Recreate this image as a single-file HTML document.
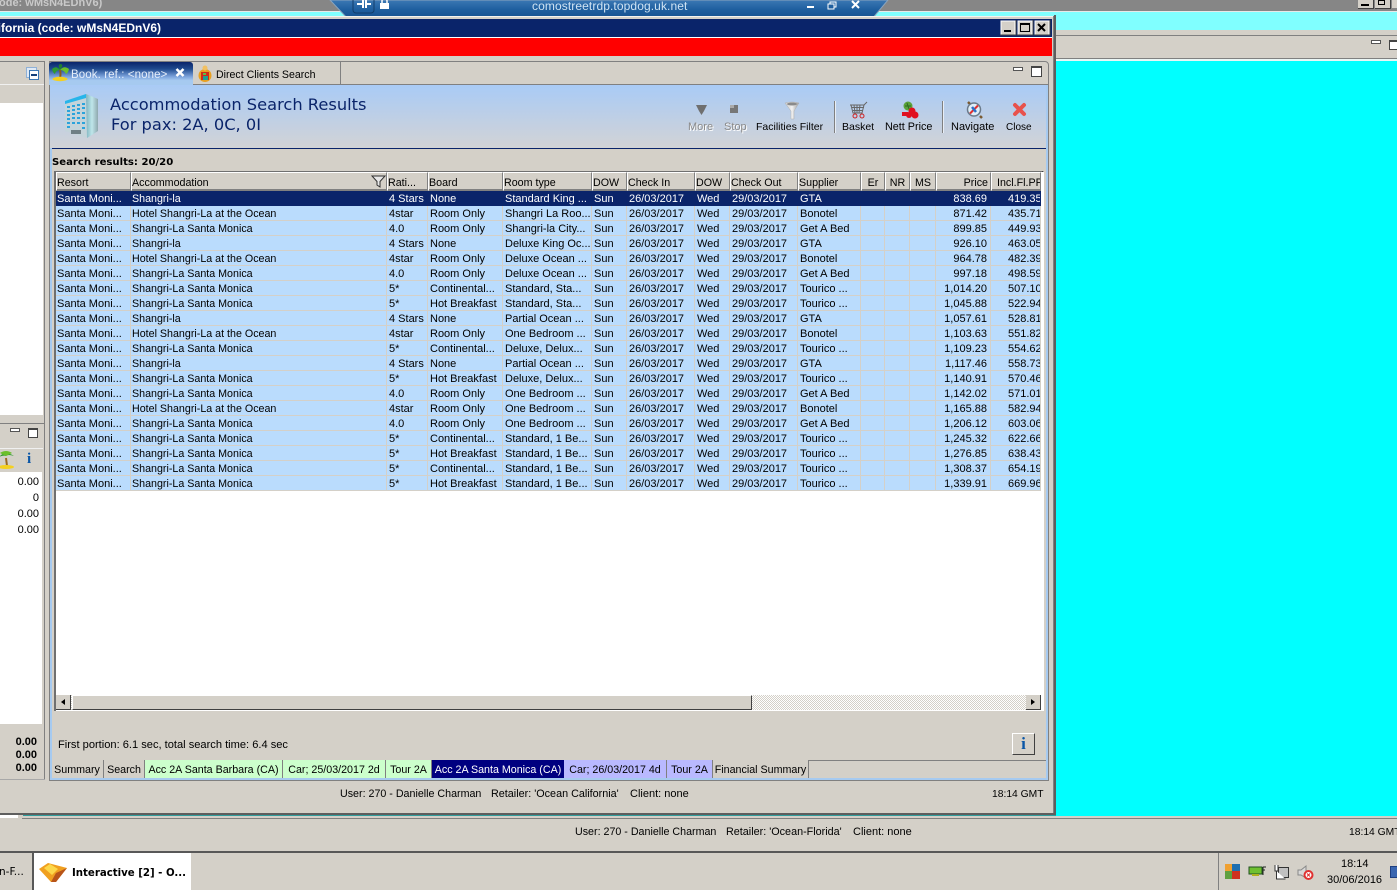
<!DOCTYPE html>
<html><head><meta charset="utf-8"><title>Accommodation Search Results</title>
<style>
html,body{margin:0;padding:0;width:1397px;height:890px;overflow:hidden;background:#d4d0c8}
body{position:relative;font:11px/13px "Liberation Sans",sans-serif;color:#000}
.a{position:absolute}
.t{position:absolute;white-space:nowrap;font:11px/17px "Liberation Sans",sans-serif;color:#000}
table{position:absolute;border-collapse:separate;border-spacing:0;table-layout:fixed;font:11px/13px "Liberation Sans",sans-serif}
#rows{left:56px;top:191px;width:985px}
#rows td{height:14px;padding:0 0 0 2px;border-right:1px solid #d4d0c8;border-bottom:1px solid #d4d0c8;background:#badcfd;white-space:nowrap;overflow:hidden;line-height:12px;vertical-align:bottom;box-sizing:content-box}
#rows td:nth-child(-n+2){padding-left:1px}
#rows td:nth-child(2){font-size:10.7px}
#rows tr.s td{background:#0a246a;color:#fff;border-color:#0a246a}
#rows td.r{text-align:right;padding:0 3px 0 0}
#rows td.q{padding-left:17px}
#hd{left:56px;top:172px;width:985px}
#hd th{padding:4px 0 0 0;font-weight:400;font-size:10.7px;line-height:13px;text-align:left;background:#d4d0c8;border-top:1px solid #fff;border-left:1px solid #fff;border-right:1px solid #808080;border-bottom:1px solid #808080;box-shadow:inset 0 -1px #808080;white-space:nowrap;overflow:hidden;box-sizing:content-box}
#hd th.r{text-align:right;padding:4px 2px 0 0}
#hd th.m{text-align:center;padding:4px 0 0 0}
.tab{position:absolute;top:760px;height:18px;line-height:20px;font-size:10.7px;text-align:center;white-space:nowrap;border-right:1px solid #808080;box-sizing:border-box}
</style></head><body>

<!-- top grey band + background -->
<div class="a" style="left:0;top:0;width:1397px;height:11px;background:#868686"></div>
<div class="a" style="left:0;top:11px;width:1397px;height:1px;background:#e8e8e8"></div>
<div class="a" style="left:1056px;top:12px;width:341px;height:18px;background:#80ffff"></div>
<div class="a" style="left:0;top:12px;width:1056px;height:4px;background:#80ffff"></div>
<div class="t" style="left:-1px;top:-4px;font-weight:700;color:#c9c9c9;font-size:11px;line-height:14px">ode: wMsN4EDnV6)</div>
<div class="a" style="left:1358px;top:0;width:15px;height:8px;background:#d4d0c8;border-right:1px solid #404040;border-bottom:1px solid #404040"><div class="a" style="left:3px;top:4px;width:8px;height:2px;background:#000"></div></div>
<div class="a" style="left:1375px;top:0;width:15px;height:8px;background:#d4d0c8;border-right:1px solid #404040;border-bottom:1px solid #404040"><div class="a" style="left:3px;top:0;width:7px;height:5px;border:1px solid #000;box-sizing:border-box"></div></div>
<div class="a" style="left:1392px;top:0;width:5px;height:8px;background:#d4d0c8"></div>

<!-- right background pane -->
<div class="a" style="left:1056px;top:30px;width:341px;height:5px;background:#d4d0c8"></div>
<div class="a" style="left:1056px;top:35px;width:341px;height:1px;background:#808080"></div>
<div class="a" style="left:1056px;top:36px;width:341px;height:22px;background:#d4d0c8"></div>
<div class="a" style="left:1056px;top:58px;width:341px;height:1px;background:#808080"></div>
<div class="a" style="left:1056px;top:59px;width:341px;height:2px;background:#e9f6f5"></div>
<div class="a" style="left:1056px;top:61px;width:341px;height:755px;background:#0ff"></div>
<div class="a" style="left:1371px;top:40px;width:10px;height:4px;background:#fff;border:1px solid #555;box-sizing:border-box"></div>
<div class="a" style="left:1389px;top:40px;width:8px;height:10px;background:#fff;border:1px solid #444;border-right:0;border-top-width:2px;box-sizing:border-box"></div>

<!-- RDP connection bar -->
<svg class="a" style="left:325px;top:0" width="570" height="21">
<defs><linearGradient id="cb" x1="0" y1="0" x2="0" y2="1"><stop offset="0" stop-color="#3b78b4"/><stop offset=".5" stop-color="#1f5f9f"/><stop offset="1" stop-color="#15508f"/></linearGradient></defs>
<polygon points="5,0 563,0 547,19 23,19" fill="url(#cb)" stroke="#8aa4bd" stroke-width="1"/>
<rect x="28" y="-4" width="21" height="17" rx="3" fill="none" stroke="#123d6b"/>
<path d="M32 4h6M38 0v8M41 0v8M41 4h5" stroke="#fff" stroke-width="2" fill="none"/>
<rect x="55" y="3" width="9" height="6" fill="#fff"/><path d="M57 3V1a2.500 2.500 0 015 0v2" stroke="#fff" stroke-width="1.500" fill="none"/>
<rect x="482" y="6" width="7" height="2" fill="#fff"/>
<rect x="505" y="2" width="6" height="5" fill="none" stroke="#fff"/><rect x="503" y="4" width="6" height="5" fill="#1f5f9f" stroke="#fff"/>
<path d="M527 1l7 7M534 1l-7 7" stroke="#fff" stroke-width="2"/>
</svg>
<div class="t" style="left:532px;top:-1px;color:#cfe3f3;font-size:12px;line-height:14px;letter-spacing:.1px">comostreetrdp.topdog.uk.net</div>

<!-- main window frame -->
<div class="a" style="left:0;top:16px;width:1056px;height:800px;background:#d4d0c8"></div>
<div class="a" style="left:0;top:16px;width:1054px;height:1px;background:#f4f2ee"></div>
<div class="a" style="left:1053px;top:16px;width:1px;height:798px;background:#808080"></div>
<div class="a" style="left:1054px;top:15px;width:2px;height:800px;background:#5e5e5e"></div>
<div class="a" style="left:0;top:813px;width:1056px;height:2px;background:#5e5e5e"></div>
<div class="a" style="left:0;top:19px;width:1052px;height:18px;background:#0a246a"></div>
<div class="t" style="left:-21px;top:21px;color:#fff;font-weight:700;font-size:12px;line-height:15px">California (code: wMsN4EDnV6)</div>
<div class="a" style="left:0;top:37px;width:1052px;height:1px;background:#fff"></div>
<div class="a" style="left:0;top:38px;width:1052px;height:18px;background:#f00"></div>

<!-- window buttons -->
<svg class="a" style="left:1000px;top:20px" width="52" height="16">
<g><rect x="1" y="1" width="14" height="14" fill="#d4d0c8" stroke="#fff"/><path d="M16 0v15H0" fill="none" stroke="#404040"/><rect x="4" y="10" width="7" height="2" fill="#000"/></g>
<g transform="translate(17 0)"><rect x="1" y="1" width="14" height="14" fill="#d4d0c8" stroke="#fff"/><path d="M16 0v15H0" fill="none" stroke="#404040"/><rect x="3.500" y="3.500" width="9" height="8" fill="none" stroke="#000"/><rect x="3" y="3" width="10" height="2" fill="#000"/></g>
<g transform="translate(34 0)"><rect x="1" y="1" width="14" height="14" fill="#d4d0c8" stroke="#fff"/><path d="M16 0v15H0" fill="none" stroke="#404040"/><path d="M4 4l7 7M11 4l-7 7" stroke="#000" stroke-width="2"/></g>
</svg>

<!-- left upper pane -->
<div class="a" style="left:0;top:61px;width:45px;height:1px;background:#808080"></div>
<div class="a" style="left:44px;top:61px;width:1px;height:719px;background:#808080"></div>
<div class="a" style="left:0;top:84px;width:44px;height:1px;background:#f0f0f0"></div>
<div class="a" style="left:0;top:85px;width:44px;height:18px;background:#d4d0c8"></div>
<div class="a" style="left:0;top:103px;width:43px;height:312px;background:#fff"></div>
<svg class="a" style="left:26px;top:67px" width="14" height="14"><rect x=".5" y=".5" width="10" height="10" fill="#dfe9f5" stroke="#8fb0d6"/><rect x="3.500" y="3.500" width="9" height="9" fill="#fff" stroke="#3d78b4"/><rect x="5" y="7" width="6" height="2" fill="#16407a"/></svg>

<!-- left lower pane -->
<div class="a" style="left:0;top:423px;width:44px;height:1px;background:#808080"></div>
<div class="a" style="left:10px;top:428px;width:10px;height:4px;background:#fff;border:1px solid #555;box-sizing:border-box"></div>
<div class="a" style="left:28px;top:428px;width:10px;height:10px;background:#fff;border:1px solid #444;border-top-width:2px;box-sizing:border-box"></div>
<div class="a" style="left:0;top:448px;width:43px;height:1px;background:#f0f0f0"></div>
<svg class="a" style="left:0;top:449px" width="16" height="20"><path d="M6 9l1 8" stroke="#9a6a1f" stroke-width="2"/><ellipse cx="6" cy="18" rx="8" ry="2" fill="#f4d020"/><path d="M-1 8Q5 1 14 7Q8 5 6 7Q3 6-1 8z" fill="#2f9a2f"/><path d="M0 4Q6 0 12 4L6 7z" fill="#6cbf2a"/></svg>
<div class="t" style="left:27px;top:451px;color:#0a56a6;font:700 15px/16px 'Liberation Serif',serif">i</div>
<div class="a" style="left:0;top:472px;width:42px;height:252px;background:#fff"></div>
<div class="t" style="right:1358px;top:474px">0.00</div>
<div class="t" style="right:1358px;top:490px">0</div>
<div class="t" style="right:1358px;top:506px">0.00</div>
<div class="t" style="right:1358px;top:522px">0.00</div>
<div class="t" style="right:1360px;top:734px;font-weight:700">0.00</div>
<div class="t" style="right:1360px;top:747px;font-weight:700">0.00</div>
<div class="t" style="right:1360px;top:760px;font-weight:700">0.00</div>
<div class="a" style="left:0;top:779px;width:45px;height:1px;background:#a8a8a8"></div>

<!-- main pane -->
<div class="a" style="left:49px;top:61px;width:1000px;height:720px;background:#d4d0c8;border:1px solid #808080;border-radius:0 4px 0 0;box-sizing:border-box"></div>
<div class="a" style="left:50px;top:85px;width:2px;height:695px;background:#a6caf0"></div>
<div class="a" style="left:1046px;top:85px;width:2px;height:695px;background:#a6caf0"></div>
<div class="a" style="left:50px;top:778px;width:998px;height:2px;background:#a6caf0"></div>
<div class="a" style="left:50px;top:84px;width:998px;height:1px;background:#808080"></div>
<div class="a" style="left:50px;top:85px;width:996px;height:63px;background:linear-gradient(#a9cbf6,#d2d3d6)"></div>
<div class="a" style="left:52px;top:148px;width:994px;height:1px;background:#0a246a"></div>

<!-- pane tabs -->
<div class="a" style="left:49px;top:62px;width:144px;height:23px;background:linear-gradient(#0a246a,#1f4a8e 30%,#7fa6de 65%,#a6caf0 80%);border-radius:3px 3px 0 0"></div>
<div class="a" style="left:193px;top:62px;width:148px;height:22px;border-right:1px solid #808080;box-sizing:border-box"></div>
<svg class="a" style="left:52px;top:64px" width="18" height="18">
<path d="M8 6q1 4 0 8" stroke="#8a5a1a" stroke-width="2" fill="none"/>
<ellipse cx="8" cy="15" rx="7.500" ry="2.200" fill="#f4d020"/>
<path d="M8 6Q4 1 0 5Q1 9 3 10Q4 6 8 6z" fill="#2f9a2f"/>
<path d="M8 6Q12 1 17 5Q16 9 14 10Q12 6 8 6z" fill="#6cbf2a"/>
<path d="M8 6Q5 0 9 0Q12 1 8 6z" fill="#1f7f2f"/>
</svg>
<div class="t" style="left:71px;top:67px;color:#e6eefa;font-size:11.500px;letter-spacing:.1px">Book. ref.: &lt;none&gt;</div>
<svg class="a" style="left:175px;top:68px" width="11" height="10"><path d="M1.500 1l7 7M8.500 1l-7 7" stroke="#fff" stroke-width="2.500"/></svg>
<svg class="a" style="left:197px;top:65px" width="17" height="17"><circle cx="8" cy="10.500" r="6.500" fill="#e8a020"/><rect x="4" y="7" width="8" height="8" fill="#d02a1a"/><circle cx="8" cy="3" r="2.500" fill="#f2c060"/><rect x="6" y="11" width="5" height="4" fill="#1fa090"/><rect x="6" y="8" width="3" height="2" fill="#5fc040"/></svg>
<div class="t" style="left:216px;top:67px;font-size:10.600px">Direct Clients Search</div>
<div class="a" style="left:1013px;top:67px;width:10px;height:4px;background:#fff;border:1px solid #555;box-sizing:border-box"></div>
<div class="a" style="left:1031px;top:66px;width:11px;height:11px;background:#fff;border:1px solid #444;border-top-width:2px;box-sizing:border-box"></div>

<!-- header content -->
<svg class="a" style="left:64px;top:92px" width="36" height="48">
<defs><linearGradient id="bd" x1="0" y1="0" x2="1" y2="0"><stop offset="0" stop-color="#7fb4bf"/><stop offset=".5" stop-color="#bfe6ea"/><stop offset="1" stop-color="#8fa8ae"/></linearGradient></defs>
<polygon points="1,9 22,3 23,46 1,39" fill="#c4d4da"/>
<polygon points="22,2 34,7 34,39 23,46" fill="url(#bd)"/>
<polygon points="1,9 22,2 22,6 1,12" fill="#27b5ea"/>
<g fill="#2aa3dc"><rect x="3" y="14" width="3" height="2"/><rect x="8" y="13" width="3" height="2"/><rect x="13" y="12" width="3" height="2"/><rect x="18" y="11" width="3" height="2"/>
<rect x="3" y="18" width="3" height="2"/><rect x="8" y="17" width="3" height="2"/><rect x="13" y="16" width="3" height="2"/><rect x="18" y="15" width="3" height="2"/>
<rect x="3" y="22" width="3" height="2"/><rect x="8" y="21" width="3" height="2"/><rect x="13" y="20" width="3" height="2"/><rect x="18" y="20" width="3" height="2"/>
<rect x="3" y="26" width="3" height="2"/><rect x="8" y="25" width="3" height="2"/><rect x="13" y="25" width="3" height="2"/><rect x="18" y="25" width="3" height="2"/>
<rect x="3" y="30" width="3" height="2"/><rect x="8" y="30" width="3" height="2"/><rect x="13" y="30" width="3" height="2"/><rect x="18" y="30" width="3" height="2"/>
<rect x="3" y="34" width="3" height="2"/><rect x="18" y="35" width="3" height="2"/></g>
<rect x="7" y="38" width="10" height="4" fill="#6f7f85"/>
</svg>
<div class="t" style="left:110px;top:95px;color:#0a246a;font:16.250px/20px 'DejaVu Sans',sans-serif">Accommodation Search Results</div>
<div class="t" style="left:111px;top:115px;color:#0a246a;font:16.250px/20px 'DejaVu Sans',sans-serif">For pax: 2A, 0C, 0I</div>

<!-- toolbar -->
<svg class="a" style="left:695px;top:103px" width="13" height="13"><path d="M1 2h11l-3 6-2.500 4L4 8z" fill="#6f6f6f"/></svg>
<svg class="a" style="left:729px;top:104px" width="10" height="10"><rect x="1" y="1" width="8" height="8" fill="#777"/><rect x="1" y="1" width="4" height="3" fill="#aaa"/></svg>
<svg class="a" style="left:784px;top:101px" width="16" height="19">
<defs><linearGradient id="fn" x1="0" y1="0" x2="1" y2="0"><stop offset="0" stop-color="#c8c8c8"/><stop offset=".5" stop-color="#f2f2f2"/><stop offset="1" stop-color="#9a9a9a"/></linearGradient></defs>
<path d="M1 2Q8 0 15 2L10 10V18H7V10z" fill="url(#fn)" stroke="#b0b0b0" stroke-width=".5"/><ellipse cx="8" cy="3" rx="5" ry="1.500" fill="#8a8a8a"/></svg>
<div class="t" style="left:688px;top:119px;color:#8a8a8a;text-shadow:1px 1px 0 #fff">More</div>
<div class="t" style="left:724px;top:119px;color:#8a8a8a;text-shadow:1px 1px 0 #fff">Stop</div>
<div class="t" style="left:756px;top:119px;font-size:10.500px">Facilities Filter</div>
<div class="a" style="left:834px;top:101px;width:1px;height:32px;background:#808080;border-right:1px solid #e8eef6"></div>
<svg class="a" style="left:850px;top:101px" width="18" height="18"><path d="M0 4h14l3-3M1 4l2 8h9l2-8M4 4l1 8M7 4v8M10 4l-1 8M2 6.500h12M3 9.500h10" stroke="#666" stroke-width="1" fill="none"/><circle cx="5" cy="15" r="2" fill="none" stroke="#d02020"/><circle cx="12" cy="15" r="2" fill="none" stroke="#d02020"/></svg>
<div class="t" style="left:842px;top:119px;font-size:10.500px">Basket</div>
<svg class="a" style="left:901px;top:101px" width="18" height="18"><circle cx="7" cy="5" r="4.500" fill="#5aa23a"/><path d="M4 5h6M6 2l2 6" stroke="#2f6a20"/><rect x="1" y="11" width="6" height="4" fill="#e01020"/><circle cx="11" cy="10" r="3.500" fill="#e01020"/><circle cx="14" cy="14" r="3.500" fill="#e01020"/><circle cx="8" cy="14" r="3" fill="#e01020"/></svg>
<div class="t" style="left:885px;top:119px;font-size:10.800px">Nett Price</div>
<div class="a" style="left:942px;top:101px;width:1px;height:32px;background:#808080;border-right:1px solid #e8eef6"></div>
<svg class="a" style="left:965px;top:100px" width="18" height="19"><path d="M3 2l3 3M15 16l2 2" stroke="#7a5a30" stroke-width="2.500"/><circle cx="9" cy="9.500" r="6.500" fill="#dfeef8" stroke="#6a7a8a" stroke-width="1.500"/><path d="M5 13.500l8-8" stroke="#e03030" stroke-width="2"/><path d="M7 7l4 5" stroke="#2a70c8" stroke-width="2.500"/></svg>
<div class="t" style="left:951px;top:119px">Navigate</div>
<svg class="a" style="left:1012px;top:102px" width="15" height="15"><path d="M3 3l9 9M12 3l-9 9" stroke="#e8524c" stroke-width="4" stroke-linecap="round"/></svg>
<div class="t" style="left:1006px;top:119px;font-size:10px">Close</div>

<div class="t" style="left:52px;top:154px;font-weight:700;font-family:'DejaVu Sans',sans-serif;font-size:10.100px">Search results: 20/20</div>

<!-- grid frame -->
<div class="a" style="left:54px;top:171px;width:990px;height:540px;background:#fff;border-top:1px solid #404040;border-left:1px solid #404040;border-right:1px solid #fff;border-bottom:1px solid #fff;box-sizing:border-box"></div>
<div class="a" style="left:54px;top:171px;width:2px;height:540px;background:#707070"></div>
<div class="a" style="left:54px;top:171px;width:988px;height:1px;background:#707070"></div>

<table id="hd"><colgroup><col style="width:75px"><col style="width:256px"><col style="width:41px"><col style="width:75px"><col style="width:89px"><col style="width:35px"><col style="width:68px"><col style="width:35px"><col style="width:68px"><col style="width:63px"><col style="width:24px"><col style="width:25px"><col style="width:26px"><col style="width:55px"><col style="width:50px"></colgroup>
<tr><th>Resort</th><th>Accommodation</th><th>Rati...</th><th>Board</th><th>Room type</th><th>DOW</th><th>Check In</th><th>DOW</th><th>Check Out</th><th>Supplier</th><th class="m">Er</th><th class="m">NR</th><th class="m">MS</th><th class="r">Price</th><th style="padding-left:5px">Incl.Fl.PP</th></tr></table>
<svg class="a" style="left:371px;top:175px" width="15" height="13"><path d="M1 1h13L9 6.500V12L6 10V6.500z" fill="#e8e8e8" stroke="#303030"/></svg>

<table id="rows"><colgroup><col style="width:75px"><col style="width:256px"><col style="width:41px"><col style="width:75px"><col style="width:89px"><col style="width:35px"><col style="width:68px"><col style="width:35px"><col style="width:68px"><col style="width:63px"><col style="width:24px"><col style="width:25px"><col style="width:26px"><col style="width:55px"><col style="width:50px"></colgroup>
<tr class="s"><td>Santa Moni...</td><td>Shangri-la</td><td>4 Stars</td><td>None</td><td>Standard King ...</td><td>Sun</td><td>26/03/2017</td><td>Wed</td><td>29/03/2017</td><td>GTA</td><td></td><td></td><td></td><td class="r">838.69</td><td class="q">419.35</td></tr>
<tr><td>Santa Moni...</td><td>Hotel Shangri-La at the Ocean</td><td>4star</td><td>Room Only</td><td>Shangri La Roo...</td><td>Sun</td><td>26/03/2017</td><td>Wed</td><td>29/03/2017</td><td>Bonotel</td><td></td><td></td><td></td><td class="r">871.42</td><td class="q">435.71</td></tr>
<tr><td>Santa Moni...</td><td>Shangri-La Santa Monica</td><td>4.0</td><td>Room Only</td><td>Shangri-la City...</td><td>Sun</td><td>26/03/2017</td><td>Wed</td><td>29/03/2017</td><td>Get A Bed</td><td></td><td></td><td></td><td class="r">899.85</td><td class="q">449.93</td></tr>
<tr><td>Santa Moni...</td><td>Shangri-la</td><td>4 Stars</td><td>None</td><td>Deluxe King Oc...</td><td>Sun</td><td>26/03/2017</td><td>Wed</td><td>29/03/2017</td><td>GTA</td><td></td><td></td><td></td><td class="r">926.10</td><td class="q">463.05</td></tr>
<tr><td>Santa Moni...</td><td>Hotel Shangri-La at the Ocean</td><td>4star</td><td>Room Only</td><td>Deluxe Ocean ...</td><td>Sun</td><td>26/03/2017</td><td>Wed</td><td>29/03/2017</td><td>Bonotel</td><td></td><td></td><td></td><td class="r">964.78</td><td class="q">482.39</td></tr>
<tr><td>Santa Moni...</td><td>Shangri-La Santa Monica</td><td>4.0</td><td>Room Only</td><td>Deluxe Ocean ...</td><td>Sun</td><td>26/03/2017</td><td>Wed</td><td>29/03/2017</td><td>Get A Bed</td><td></td><td></td><td></td><td class="r">997.18</td><td class="q">498.59</td></tr>
<tr><td>Santa Moni...</td><td>Shangri-La Santa Monica</td><td>5*</td><td>Continental...</td><td>Standard, Sta...</td><td>Sun</td><td>26/03/2017</td><td>Wed</td><td>29/03/2017</td><td>Tourico ...</td><td></td><td></td><td></td><td class="r">1,014.20</td><td class="q">507.10</td></tr>
<tr><td>Santa Moni...</td><td>Shangri-La Santa Monica</td><td>5*</td><td>Hot Breakfast</td><td>Standard, Sta...</td><td>Sun</td><td>26/03/2017</td><td>Wed</td><td>29/03/2017</td><td>Tourico ...</td><td></td><td></td><td></td><td class="r">1,045.88</td><td class="q">522.94</td></tr>
<tr><td>Santa Moni...</td><td>Shangri-la</td><td>4 Stars</td><td>None</td><td>Partial Ocean ...</td><td>Sun</td><td>26/03/2017</td><td>Wed</td><td>29/03/2017</td><td>GTA</td><td></td><td></td><td></td><td class="r">1,057.61</td><td class="q">528.81</td></tr>
<tr><td>Santa Moni...</td><td>Hotel Shangri-La at the Ocean</td><td>4star</td><td>Room Only</td><td>One Bedroom ...</td><td>Sun</td><td>26/03/2017</td><td>Wed</td><td>29/03/2017</td><td>Bonotel</td><td></td><td></td><td></td><td class="r">1,103.63</td><td class="q">551.82</td></tr>
<tr><td>Santa Moni...</td><td>Shangri-La Santa Monica</td><td>5*</td><td>Continental...</td><td>Deluxe, Delux...</td><td>Sun</td><td>26/03/2017</td><td>Wed</td><td>29/03/2017</td><td>Tourico ...</td><td></td><td></td><td></td><td class="r">1,109.23</td><td class="q">554.62</td></tr>
<tr><td>Santa Moni...</td><td>Shangri-la</td><td>4 Stars</td><td>None</td><td>Partial Ocean ...</td><td>Sun</td><td>26/03/2017</td><td>Wed</td><td>29/03/2017</td><td>GTA</td><td></td><td></td><td></td><td class="r">1,117.46</td><td class="q">558.73</td></tr>
<tr><td>Santa Moni...</td><td>Shangri-La Santa Monica</td><td>5*</td><td>Hot Breakfast</td><td>Deluxe, Delux...</td><td>Sun</td><td>26/03/2017</td><td>Wed</td><td>29/03/2017</td><td>Tourico ...</td><td></td><td></td><td></td><td class="r">1,140.91</td><td class="q">570.46</td></tr>
<tr><td>Santa Moni...</td><td>Shangri-La Santa Monica</td><td>4.0</td><td>Room Only</td><td>One Bedroom ...</td><td>Sun</td><td>26/03/2017</td><td>Wed</td><td>29/03/2017</td><td>Get A Bed</td><td></td><td></td><td></td><td class="r">1,142.02</td><td class="q">571.01</td></tr>
<tr><td>Santa Moni...</td><td>Hotel Shangri-La at the Ocean</td><td>4star</td><td>Room Only</td><td>One Bedroom ...</td><td>Sun</td><td>26/03/2017</td><td>Wed</td><td>29/03/2017</td><td>Bonotel</td><td></td><td></td><td></td><td class="r">1,165.88</td><td class="q">582.94</td></tr>
<tr><td>Santa Moni...</td><td>Shangri-La Santa Monica</td><td>4.0</td><td>Room Only</td><td>One Bedroom ...</td><td>Sun</td><td>26/03/2017</td><td>Wed</td><td>29/03/2017</td><td>Get A Bed</td><td></td><td></td><td></td><td class="r">1,206.12</td><td class="q">603.06</td></tr>
<tr><td>Santa Moni...</td><td>Shangri-La Santa Monica</td><td>5*</td><td>Continental...</td><td>Standard, 1 Be...</td><td>Sun</td><td>26/03/2017</td><td>Wed</td><td>29/03/2017</td><td>Tourico ...</td><td></td><td></td><td></td><td class="r">1,245.32</td><td class="q">622.66</td></tr>
<tr><td>Santa Moni...</td><td>Shangri-La Santa Monica</td><td>5*</td><td>Hot Breakfast</td><td>Standard, 1 Be...</td><td>Sun</td><td>26/03/2017</td><td>Wed</td><td>29/03/2017</td><td>Tourico ...</td><td></td><td></td><td></td><td class="r">1,276.85</td><td class="q">638.43</td></tr>
<tr><td>Santa Moni...</td><td>Shangri-La Santa Monica</td><td>5*</td><td>Continental...</td><td>Standard, 1 Be...</td><td>Sun</td><td>26/03/2017</td><td>Wed</td><td>29/03/2017</td><td>Tourico ...</td><td></td><td></td><td></td><td class="r">1,308.37</td><td class="q">654.19</td></tr>
<tr><td>Santa Moni...</td><td>Shangri-La Santa Monica</td><td>5*</td><td>Hot Breakfast</td><td>Standard, 1 Be...</td><td>Sun</td><td>26/03/2017</td><td>Wed</td><td>29/03/2017</td><td>Tourico ...</td><td></td><td></td><td></td><td class="r">1,339.91</td><td class="q">669.96</td></tr>
</table>

<!-- scrollbar -->
<div class="a" style="left:56px;top:695px;width:985px;height:15px;background:repeating-conic-gradient(#d4d0c8 0 25%,#fff 0 50%) 0 0/2px 2px"></div>
<div class="a" style="left:56px;top:695px;width:15px;height:15px;background:#d4d0c8;border-right:1px solid #404040;border-bottom:1px solid #404040;box-sizing:border-box"></div>
<div class="a" style="left:61px;top:699px;width:0;height:0;border:3.500px solid transparent;border-right:4px solid #000;border-left:0"></div>
<div class="a" style="left:72px;top:695px;width:680px;height:15px;background:#d4d0c8;border-right:1px solid #404040;border-bottom:1px solid #404040;border-left:1px solid #fff;border-top:1px solid #fff;box-sizing:border-box"></div>
<div class="a" style="left:1026px;top:695px;width:15px;height:15px;background:#d4d0c8;border-right:1px solid #404040;border-bottom:1px solid #404040;box-sizing:border-box"></div>
<div class="a" style="left:1031px;top:699px;width:0;height:0;border:3.500px solid transparent;border-left:4px solid #000;border-right:0"></div>

<div class="t" style="left:58px;top:737px;font-size:11.100px">First portion: 6.1 sec, total search time: 6.4 sec</div>
<div class="a" style="left:1012px;top:733px;width:23px;height:22px;background:#d4d0c8;border:1px solid;border-color:#fff #404040 #404040 #fff;box-sizing:border-box;text-align:center;color:#0a56a6;font:700 17px/20px 'Liberation Serif',serif">i</div>

<!-- bottom tabs -->
<div class="a" style="left:808px;top:760px;width:238px;height:1px;background:#808080"></div>
<div class="tab" style="left:51px;width:53px">Summary</div>
<div class="tab" style="left:104px;width:41px">Search</div>
<div class="tab" style="left:145px;width:138px;background:#ccffcc">Acc 2A Santa Barbara (CA)</div>
<div class="tab" style="left:283px;width:103px;background:#ccffcc">Car; 25/03/2017 2d</div>
<div class="tab" style="left:386px;width:46px;background:#ccffcc">Tour 2A</div>
<div class="tab" style="left:432px;width:132px;background:#000080;color:#fff;border:0">Acc 2A Santa Monica (CA)</div>
<div class="tab" style="left:564px;width:103px;background:#b9b9ff">Car; 26/03/2017 4d</div>
<div class="tab" style="left:667px;width:46px;background:#b9b9ff">Tour 2A</div>
<div class="tab" style="left:713px;width:96px">Financial Summary</div>

<!-- status rows -->
<div class="t" style="left:340px;top:786px;font-size:10.700px">User: 270 - Danielle Charman</div>
<div class="t" style="left:491px;top:786px;font-size:10.800px">Retailer: 'Ocean California'</div>
<div class="t" style="left:630px;top:786px">Client: none</div>
<div class="t" style="left:992px;top:786px;font-size:10.300px">18:14 GMT</div>

<div class="a" style="left:0;top:815px;width:18px;height:3px;background:#fff"></div>
<div class="a" style="left:23px;top:815px;width:1033px;height:1px;background:#2f9e9e"></div>
<div class="a" style="left:22px;top:818px;width:1375px;height:1px;background:#808080"></div>
<div class="t" style="left:575px;top:824px;font-size:10.700px">User: 270 - Danielle Charman</div>
<div class="t" style="left:726px;top:824px;font-size:10.800px">Retailer: 'Ocean-Florida'</div>
<div class="t" style="left:853px;top:824px">Client: none</div>
<div class="t" style="left:1349px;top:824px;font-size:10.300px">18:14 GMT</div>

<!-- taskbar -->
<div class="a" style="left:0;top:851px;width:1397px;height:2px;background:#585858"></div>
<div class="t" style="left:-1px;top:864px;font-family:'DejaVu Sans',sans-serif;font-size:10.500px">n-F...</div>
<div class="a" style="left:32px;top:853px;width:2px;height:37px;background:#585858"></div>
<div class="a" style="left:34px;top:853px;width:158px;height:37px;background:#fff;border-right:1px solid #d4d0c8;box-sizing:border-box"></div>
<svg class="a" style="left:38px;top:861px" width="30" height="23"><polygon points="1,8 10,2 29,7 18,21 13,21" fill="#f0a020"/><polygon points="6,7 12,3 20,8 14,14" fill="#fdd84a"/><polygon points="13,21 18,21 29,7 18,12" fill="#b8541a"/></svg>
<div class="t" style="left:72px;top:867px;font-weight:700;font-family:'DejaVu Sans',sans-serif;font-size:10.200px;line-height:13px">Interactive [2] - O...</div>

<!-- tray -->
<div class="a" style="left:1218px;top:853px;width:1px;height:37px;background:#808080"></div>
<svg class="a" style="left:1225px;top:864px" width="16" height="16"><rect x="0" y="0" width="7" height="7" fill="#f0a030"/><rect x="7" y="0" width="8" height="7" fill="#1f6fb0"/><rect x="0" y="7" width="7" height="8" fill="#5fa040"/><rect x="7" y="7" width="8" height="8" fill="#d0301f"/></svg>
<svg class="a" style="left:1248px;top:866px" width="18" height="12"><rect x="1" y="1" width="13" height="7" fill="#6fc030" stroke="#205020"/><rect x="4" y="8" width="7" height="2" fill="#b0b020"/><path d="M15 1h3M15 1v8M15 4h2" stroke="#222" fill="none"/></svg>
<svg class="a" style="left:1273px;top:864px" width="16" height="17"><rect x="5.500" y="3.500" width="10" height="10" fill="#c0c0c0" stroke="#333"/><path d="M2 1v6h3V1M3.500 7v8h9" stroke="#333" fill="#fff"/></svg>
<svg class="a" style="left:1297px;top:864px" width="17" height="17"><path d="M1 6h3l5-4v12l-5-3H1z" fill="#d8d8d8" stroke="#888"/><circle cx="11.500" cy="11" r="4" fill="#fff" stroke="#e03030" stroke-width="2"/><path d="M10 9.500l3 3M13 9.500l-3 3" stroke="#e03030"/></svg>
<div class="t" style="left:1341px;top:856px">18:14</div>
<div class="t" style="left:1327px;top:872px">30/06/2016</div>
<div class="a" style="left:1390px;top:866px;width:7px;height:12px;background:#3a66b0;border:1px solid #1f3f80;border-right:0;box-sizing:border-box"></div>
</body></html>
